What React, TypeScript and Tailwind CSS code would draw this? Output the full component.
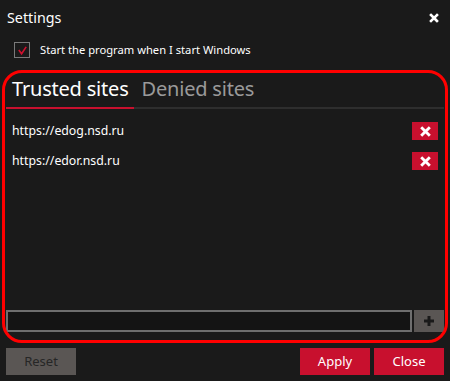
import React from "react";

const sites = ["https://edog.nsd.ru", "https://edor.nsd.ru"];

function CrossIcon({ className }: { className?: string }) {
    return (
        <svg viewBox="0 0 10 10" className={className}>
            <path d="M2 2 L8 8 M8 2 L2 8" stroke="currentColor" strokeWidth="2.6" strokeLinecap="square" />
        </svg>
    );
}

export default function App() {
    const [autoStart, setAutoStart] = React.useState(true);
    const [tab, setTab] = React.useState<"trusted" | "denied">("trusted");
    const [newSite, setNewSite] = React.useState("");

    return (
        <div
            className="relative w-[450px] h-[381px] bg-[#1a1a1a] text-white flex flex-col overflow-hidden"
            style={{ fontFamily: '"Noto Sans", "Open Sans", sans-serif' }}
        >
            <div className="flex items-center justify-between pl-[7px] pr-[11px] pt-[7px] h-[29px]">
                <span className="text-[14.3px] leading-none">Settings</span>
                <button className="w-[10px] h-[10px] text-white">
                    <CrossIcon className="w-[10px] h-[10px]" />
                </button>
            </div>

            <label className="flex items-center gap-[10px] pl-[14px] mt-[13px] cursor-pointer" onClick={() => setAutoStart(!autoStart)}>
                <span className="w-[16px] h-[16px] border border-[#7a7a7a] flex items-center justify-center">
                    {autoStart && (
                        <svg viewBox="0 0 12 12" className="w-[11px] h-[11px]">
                            <path d="M2 5.5 L5 9.5 L10 2" fill="none" stroke="#d0102e" strokeWidth="1.8" />
                        </svg>
                    )}
                </span>
                <span className="text-[11.2px] leading-none">Start the program when I start Windows</span>
            </label>

            <div className="flex-1 flex flex-col px-[6px] pt-[21px]">
                <div className="flex border-b-2 border-[#2e2e2e]">
                    <button
                        onClick={() => setTab("trusted")}
                        className={`text-[20px] tracking-[-0.2px] leading-none pl-[6px] pr-[5px] pb-[8px] -mb-[2px] border-b-2 ${tab === "trusted" ? "text-white border-[#c8102e]" : "text-[#9a9a9a] border-transparent"}`}
                    >
                        Trusted sites
                    </button>
                    <button
                        onClick={() => setTab("denied")}
                        className={`text-[20px] tracking-[-0.2px] leading-none pl-[8px] pr-[4px] pb-[8px] -mb-[2px] border-b-2 ${tab === "denied" ? "text-white border-[#c8102e]" : "text-[#9a9a9a] border-transparent"}`}
                    >
                        Denied sites
                    </button>
                </div>

                <div className="flex flex-col gap-[12px] pt-[13px] pl-[6px] pr-[6px]">
                    {(tab === "trusted" ? sites : []).map((s) => (
                        <div key={s} className="flex items-center justify-between h-[18px]">
                            <span className="text-[12.3px] leading-none">{s}</span>
                            <button className="w-[26px] h-[18px] bg-[#c8102e] flex items-center justify-center text-white">
                                <CrossIcon className="w-[11px] h-[11px]" />
                            </button>
                        </div>
                    ))}
                </div>

                <div className="flex-1" />

                <div className="flex gap-[2px] h-[22px] mb-[16px]">
                    <input
                        value={newSite}
                        onChange={(e) => setNewSite(e.target.value)}
                        className="flex-1 bg-[#141414] border-2 border-[#6e6e6e] outline-none text-[12px] px-1 text-white"
                    />
                    <button className="w-[30px] bg-[#5a5654] flex items-center justify-center">
                        <svg viewBox="0 0 12 12" className="w-[12px] h-[12px]">
                            <path d="M6 1 V11 M1 6 H11" stroke="#1a1a1a" strokeWidth="3" />
                        </svg>
                    </button>
                </div>

                <div className="flex items-center mb-[6px]">
                    <button className="w-[70px] h-[27px] bg-[#5a5654] text-[#262626] text-[13px]">Reset</button>
                    <div className="flex-1" />
                    <button className="w-[70px] h-[27px] bg-[#c8102e] text-white text-[13px]">Apply</button>
                    <button className="w-[70px] h-[27px] bg-[#c8102e] text-white text-[13px] ml-[4px]">Close</button>
                </div>
            </div>

            <div className="pointer-events-none absolute left-[2px] top-[70px] w-[446px] h-[273px] border-[3px] border-[#ff0000] rounded-[20px]" />
        </div>
    );
}
